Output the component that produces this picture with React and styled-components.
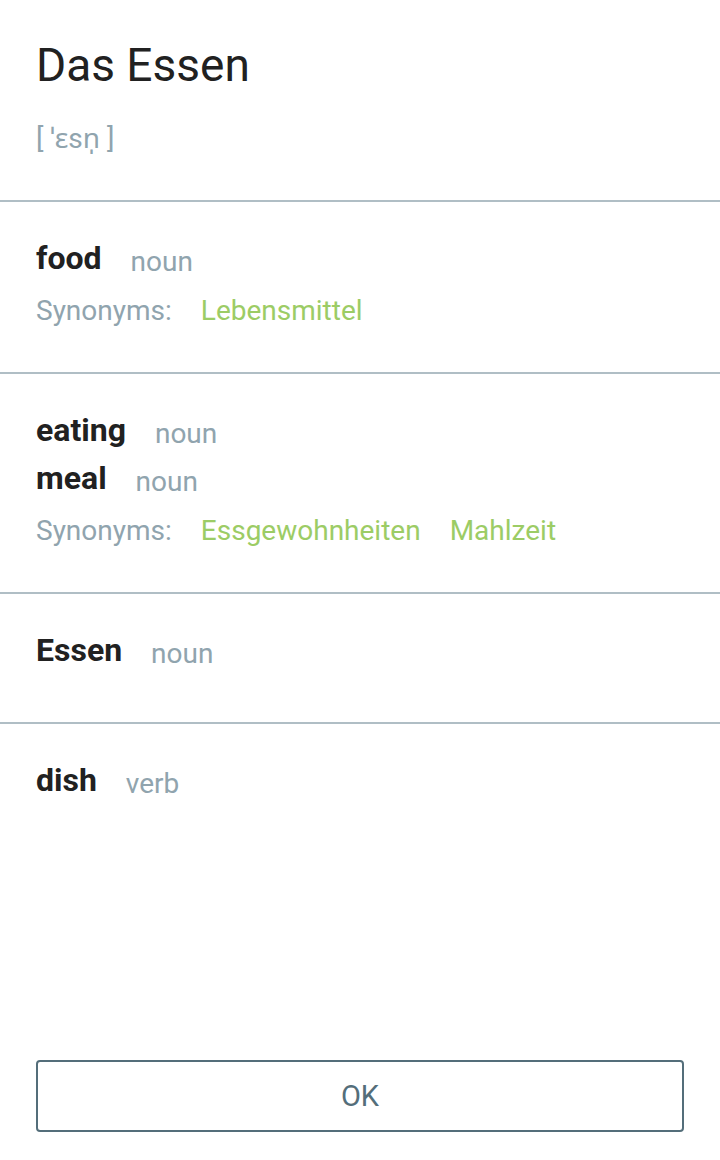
import React from "react";
import styled, { createGlobalStyle } from "styled-components";

const Global = createGlobalStyle`
  html, body { margin: 0; padding: 0; background: #ffffff; }
  body { font-family: Roboto, "Noto Sans", "DejaVu Sans", sans-serif; }
  #root { min-height: 100vh; }
`;

const Page = styled.div`
  min-height: 100vh;
  display: flex;
  flex-direction: column;
  box-sizing: border-box;
  padding-bottom: 28px;
`;

const Head = styled.header`
  padding: 38px 36px 45px;
  border-bottom: 2px solid #b0bec5;
`;

const Title = styled.h1`
  margin: 0;
  font-size: 46px;
  line-height: 54px;
  font-weight: 400;
  color: #212121;
`;

const Phonetic = styled.div`
  margin-top: 30px;
  font-size: 28px;
  line-height: 33px;
  color: #90a4ae;
`;

const Meaning = styled.section`
  padding: 34px 36px 38px;
  border-bottom: ${(p) => (p.$last ? "none" : "2px solid #b0bec5")};
`;

const Terms = styled.div`
  padding-bottom: 8px;
`;

const Term = styled.div`
  font-size: 28px;
  line-height: 48px;
  height: 48px;
  white-space: nowrap;
`;

const Word = styled.span`
  font-size: 32px;
  line-height: 1;
  font-weight: 700;
  color: #212121;
  margin-right: 29px;
`;

const Pos = styled.span`
  line-height: 1;
  color: #90a4ae;
  vertical-align: -2px;
`;

const Synonyms = styled.div`
  display: flex;
  gap: 29px;
  font-size: 28px;
  line-height: 37px;
  margin-bottom: 5px;
`;

const SynLabel = styled.span`
  color: #90a4ae;
`;

const Syn = styled.span`
  color: #9ccc65;
`;

const Spacer = styled.div`
  flex: 1;
`;

const Footer = styled.div`
  padding: 0 36px;
`;

const OkButton = styled.button`
  width: 100%;
  height: 72px;
  box-sizing: border-box;
  border: 2px solid #546e7a;
  border-radius: 4px;
  background: #ffffff;
  color: #546e7a;
  font-family: Roboto, "Noto Sans", sans-serif;
  font-size: 29px;
  font-weight: 400;
  cursor: pointer;
`;

const meanings = [
  { terms: [["food", "noun"]], synonyms: ["Lebensmittel"] },
  { terms: [["eating", "noun"], ["meal", "noun"]], synonyms: ["Essgewohnheiten", "Mahlzeit"] },
  { terms: [["Essen", "noun"]], synonyms: [] },
  { terms: [["dish", "verb"]], synonyms: [] },
];

export default function App() {
  return (
    <>
      <Global />
      <Page>
        <Head>
          <Title>Das Essen</Title>
          <Phonetic>[ ˈɛsn̩ ]</Phonetic>
        </Head>
        {meanings.map((m, i) => (
          <Meaning key={i} $last={i === meanings.length - 1}>
            <Terms>
              {m.terms.map(([w, p]) => (
                <Term key={w}>
                  <Word>{w}</Word>
                  <Pos>{p}</Pos>
                </Term>
              ))}
            </Terms>
            {m.synonyms.length > 0 && (
              <Synonyms>
                <SynLabel>Synonyms:</SynLabel>
                {m.synonyms.map((s) => (
                  <Syn key={s}>{s}</Syn>
                ))}
              </Synonyms>
            )}
          </Meaning>
        ))}
        <Spacer />
        <Footer>
          <OkButton>OK</OkButton>
        </Footer>
      </Page>
    </>
  );
}
